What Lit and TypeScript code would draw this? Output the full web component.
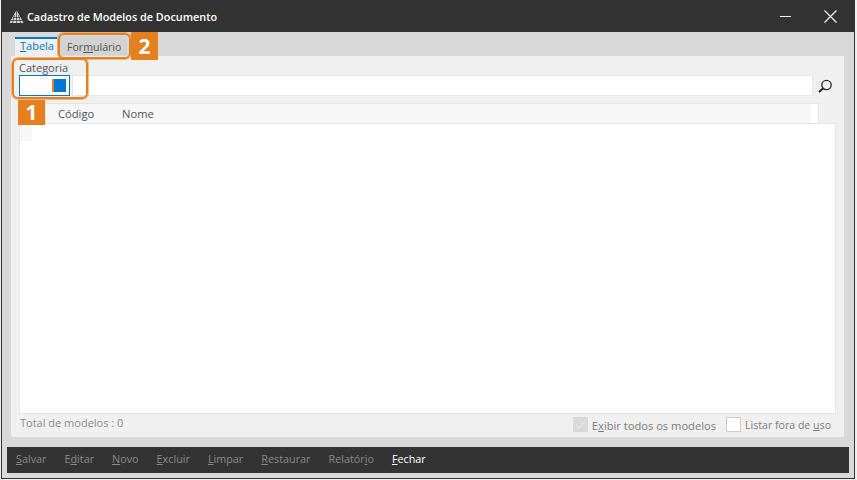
import { LitElement, html, css } from "lit";
import { customElement } from "lit/decorators.js";

@customElement("app-root")
export class AppRoot extends LitElement {
  static styles = css`
    :host { display: block; width: 857px; height: 480px; background: #f0f0f0; font-family: "Open Sans", "Noto Sans", sans-serif; font-size: 11px; color: #555; overflow: hidden; }
    * { box-sizing: border-box; }
    u { text-underline-offset: 1px; }
    .win { position: relative; width: 854px; height: 479px; margin-left: 1px; background: #d9d9d9; border: 1px solid #333; border-top: 0; display: flex; flex-direction: column; }
    .title { height: 32px; flex: none; background: #333; color: #fff; display: flex; align-items: center; padding-left: 8px; margin: 0 -1px; font-weight: 600; font-size: 10.85px; }
    .logo { width: 15px; height: 15px; margin-right: 3px; }
    .title span { flex: 1; padding-top: 1px; }
    .wbtn { width: 45px; height: 32px; display: flex; align-items: center; justify-content: center; }
    .wbtn.close { margin-right: 2px; }
    .content { flex: 1; display: flex; flex-direction: column; padding: 0 10px 0 9px; min-height: 0; }
    .tabs { height: 24px; flex: none; display: flex; align-items: flex-end; padding-left: 4px; }
    .tab { display: flex; align-items: center; }
    .tab.on { width: 42px; height: 19px; padding: 0 0 4px 5px; background: #f0f0f0; border-top: 2px solid #0078d7; color: #0078d7; }
    .tab.off { width: 67px; height: 19px; margin: 0 0 1px 3px; padding: 3px 0 0 7px; background: #d2d2d2; color: #555; font-size: 10.6px; }
    .panel { flex: none; height: 381px; background: #f0f0f0; padding: 6px 8px 0 8px; display: flex; flex-direction: column; }
    .cat { height: 13px; line-height: 11px; flex: none; font-size: 11px; color: #555; }
    .row { display: flex; height: 21px; flex: none; }
    .combo { width: 51px; height: 21px; background: #fff; border: 1px solid #0078d7; display: flex; align-items: center; justify-content: flex-end; padding-right: 3px; }
    .combo i { display: block; width: 14px; height: 13px; background: #0078d7; border-left: 2px solid #e6801e; }
    .search { width: 741px; height: 21px; margin-left: 2px; background: #fff; border: 1px solid #e6e6e6; }
    .mag { width: 14px; height: 14px; margin: 4px 0 0 5px; }
    .head { margin: 7px 17px 0 26px; height: 20px; flex: none; background: #fff; border: 1px solid #e6e6e6; border-bottom: 0; padding-right: 7px; }
    .head div { height: 100%; background: #f7f7f7; display: flex; align-items: center; padding-left: 12px; font-size: 11.2px; color: #555; }
    .head span { width: 64px; }
    .grid { flex: none; height: 291px; width: 817px; background: #fff; border: 1px solid #e6e6e6; padding: 1px 1px 1px 0; }
    .grid i { display: block; width: 12px; height: 16px; background: #f7f7f7; }
    .foot { flex: 1; display: flex; align-items: center; color: #8c8c8c; font-size: 11px; padding-bottom: 2px; }
    .foot .total { flex: 1; padding-left: 1px; padding-bottom: 5px; }
    .chk { display: flex; align-items: center; margin-right: 10px; color: #7d7d7d; font-size: 11.15px; }
    .chk.last { margin-right: 5px; font-size: 10.6px; }
    .box { width: 15px; height: 15px; margin-right: 4px; background: #d9d9d9; display: flex; align-items: center; justify-content: center; }
    .box.blank { background: #fff; border: 1px solid #ccc; }
    .chk span { padding-top: 1px; }
    .bar { height: 26px; flex: none; margin: 10px -5px 0 -4px; background: #333; display: flex; align-items: center; padding: 0 0 3px 9px; gap: 18px; font-size: 10.8px; color: #8a8a8a; }
    .bar .act { color: #fff; }
    .mark { position: absolute; border: 2px solid #e6801e; border-radius: 6px; box-shadow: 0 0 0 1px rgba(230, 128, 30, .5); pointer-events: none; }
    .m1 { left: 10px; top: 58px; width: 76px; height: 41px; }
    .m2 { left: 56px; top: 33px; width: 73px; height: 26px; }
    .badge { position: absolute; background: #e6801e; color: #fff; font-weight: 700; font-size: 21px; display: flex; align-items: center; justify-content: center; line-height: 1; }
    .b1 { left: 16px; top: 100px; width: 27px; height: 25px; }
    .b2 { left: 129px; top: 32px; width: 27px; height: 28px; }
  `;
  render() {
    return html`<div class="win">
      <div class="title">
        <svg class="logo" viewBox="0 0 15 15"><path d="M7.5 1 L14.5 14 H.5 Z" fill="#d8d8d8"/><path d="M7.5 1V14M5.5 6 3.5 14M9.5 6l2 8M2 11.5h11M4 8.5h7" stroke="#333" stroke-width=".7" fill="none"/></svg>
        <span>Cadastro de Modelos de Documento</span>
        <div class="wbtn"><svg width="11" height="11" viewBox="0 0 11 11"><path d="M0 5.5H11" stroke="#fff"/></svg></div>
        <div class="wbtn close"><svg width="13" height="13" viewBox="0 0 13 13"><path d="M.5.5 12.5 12.5M12.5.5.5 12.5" stroke="#fff" stroke-width="1.1"/></svg></div>
      </div>
      <div class="content">
        <div class="tabs">
          <div class="tab on"><span><u>T</u>abela</span></div>
          <div class="tab off"><span>For<u>m</u>ulário</span></div>
        </div>
        <div class="panel">
          <div class="cat">Categoria</div>
          <div class="row">
            <div class="combo"><i></i></div>
            <div class="search"></div>
            <svg class="mag" viewBox="0 0 14 14"><circle cx="8.5" cy="6" r="4.7" fill="none" stroke="#222" stroke-width="1.3"/><path d="M5 9.5 1 13" stroke="#222" stroke-width="2"/></svg>
          </div>
          <div class="head"><div><span>Código</span><span>Nome</span></div></div>
          <div class="grid"><i></i></div>
          <div class="foot">
            <div class="total">Total de modelos : 0</div>
            <div class="chk"><div class="box"><svg width="13" height="13" viewBox="0 0 13 13"><path d="M2 7l3 3 6-7" fill="none" stroke="#eee" stroke-width="1"/></svg></div><span>E<u>x</u>ibir todos os modelos</span></div>
            <div class="chk last"><div class="box blank"></div><span>Listar fora de <u>u</u>so</span></div>
          </div>
        </div>
        <div class="bar">
          <span><u>S</u>alvar</span><span>E<u>d</u>itar</span><span><u>N</u>ovo</span><span><u>E</u>xcluir</span><span><u>L</u>impar</span><span><u>R</u>estaurar</span><span>Relatór<u>i</u>o</span><span class="act"><u>F</u>echar</span>
        </div>
      </div>
      <div class="mark m1"></div>
      <div class="badge b1">1</div>
      <div class="mark m2"></div>
      <div class="badge b2">2</div>
    </div>`;
  }
}
